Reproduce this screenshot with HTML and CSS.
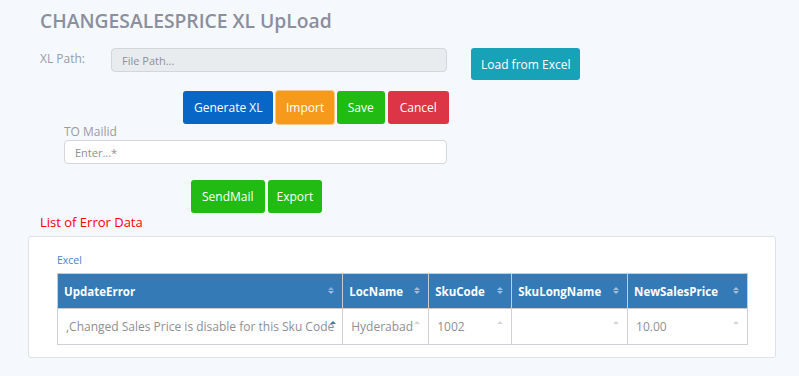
FILE: index.html
```html
<!DOCTYPE html>
<html lang="en">

<head>
    <meta charset="UTF-8">
    <meta name="viewport" content="width=device-width, initial-scale=1.0">
    <title>ChangeSalesPrice XL Upload</title>
    <link rel="stylesheet" href="styles.css">
</head>

<body>
    <div class="page">
        <h1 class="title">CHANGESALESPRICE XL UpLoad</h1>

        <!-- Path row -->
        <div class="path-row">
            <label class="label path-label">XL Path:</label>
            <input class="input input-file" type="text" placeholder="File Path..." disabled>
            <button class="btn btn-info">Load from Excel</button>
        </div>

        <div class="action-row">
            <button class="btn btn-primary">Generate XL</button>
            <button class="btn btn-warning">Import</button>
            <button class="btn btn-success">Save</button>
            <button class="btn btn-danger">Cancel</button>
        </div>

        <!-- Mail -->
        <div class="mail-group">
            <label class="label">TO Mailid</label>
            <input class="input" type="text" placeholder="Enter...*">
        </div>

        <div class="mail-actions">
            <button class="btn btn-success">SendMail</button>
            <button class="btn btn-success btn-export">Export</button>
        </div>

        <h2 class="error-title">List of Error Data</h2>

        <div class="card">
            <a class="excel-link" href="#">Excel</a>
            <table class="grid">
                <thead>
                    <tr>
                        <th class="col-error">UpdateError <span class="sort sort-active"><i class="up"></i><i class="down"></i></span></th>
                        <th class="col-loc">LocName <span class="sort"><i class="up"></i><i class="down"></i></span></th>
                        <th class="col-sku">SkuCode <span class="sort"><i class="up"></i><i class="down"></i></span></th>
                        <th class="col-name">SkuLongName <span class="sort"><i class="up"></i><i class="down"></i></span></th>
                        <th class="col-price">NewSalesPrice <span class="sort"><i class="up"></i><i class="down"></i></span></th>
                    </tr>
                </thead>
                <tbody>
                    <tr>
                        <td>,Changed Sales Price is disable for this Sku Code<span class="cell-sort cell-sort-dark"></span></td>
                        <td>Hyderabad<span class="cell-sort"></span></td>
                        <td>1002<span class="cell-sort"></span></td>
                        <td><span class="cell-sort"></span></td>
                        <td>10.00<span class="cell-sort"></span></td>
                    </tr>
                </tbody>
            </table>
        </div>
    </div>
</body>

</html>
```

FILE: styles.css
```css
/* General Styles */
body {
    margin: 0;
    background: #f5f8fd;
    font-family: 'Open Sans', 'Noto Sans', sans-serif;
    color: #6c757d;
}

.page {
    padding: 0 23px 18px 28px;
}

.title {
    margin: 0;
    padding: 9px 0 0 12px;
    font-size: 19.3px;
    font-weight: 600;
    color: #8b8f9e;
    line-height: 24px;
}

.label {
    font-size: 12px;
    color: #9a9ca3;
}

.input {
    box-sizing: border-box;
    height: 24px;
    border: 1px solid #d3d6da;
    border-radius: 4px;
    padding: 0 10px;
    font-family: inherit;
    font-size: 11px;
    background: #fff;
    color: #6c757d;
}

.input::placeholder {
    color: #8d9096;
}

.input-file {
    width: 336px;
    background: #e9ecef;
}

.path-row {
    display: flex;
    align-items: flex-start;
    margin-top: 15px;
    padding-left: 12px;
}

.path-label {
    width: 71px;
    padding-top: 2px;
}

.path-row .btn {
    margin-left: 24px;
}

.btn {
    border: none;
    border-radius: 3px;
    color: #fff;
    font-family: inherit;
    font-size: 12px;
    font-weight: 500;
    height: 33px;
    padding: 0 11px;
    cursor: pointer;
}

.btn-info {
    background: #17a2b8;
    height: 32px;
    padding: 0 10px;
}

.btn-primary {
    background: #0866c6;
}

.btn-warning {
    background: #f59a1b;
    box-shadow: 0 0 0 1px #f8c98a;
    padding: 0 9.5px;
}

.btn-success {
    background: #21bb13;
}

.btn-danger {
    background: #dc3545;
    padding: 0 12px;
}

.btn-export {
    padding: 0 9px;
}

.action-row {
    display: flex;
    gap: 3px;
    margin-top: 11px;
    padding-left: 155px;
}

.mail-group {
    display: flex;
    flex-direction: column;
    width: 383px;
    margin-top: 0;
    padding-left: 36px;
}

.mail-group .label {
    line-height: 15px;
    margin-bottom: 1px;
}

.mail-actions {
    display: flex;
    gap: 3px;
    margin-top: 16px;
    padding-left: 163px;
}

.error-title {
    margin: 0 0 0 12px;
    font-size: 13px;
    font-weight: 400;
    color: #f00;
    line-height: 18px;
}

.card {
    margin-top: 5px;
    background: #fff;
    border: 1px solid #dfe2e6;
    border-radius: 3px;
    padding: 16px 27px 12px 28px;
}

.excel-link {
    display: block;
    font-size: 10.5px;
    color: #4b7fd0;
    text-decoration: none;
    line-height: 14px;
}

.grid {
    margin-top: 6px;
    border-collapse: collapse;
    width: 691px;
}

.grid th {
    background: #337ab7;
    color: #fff;
    font-size: 11.5px;
    font-weight: 700;
    text-align: left;
    height: 34px;
    padding: 0 6px;
    border: 1px solid #c7ccd2;
    position: relative;
}

.grid td {
    height: 35px;
    padding: 0 6px 0 8px;
    font-size: 12px;
    color: #8d9096;
    border: 1px solid #ced2d6;
    position: relative;
}

.col-error { width: 273px; }
.col-loc { width: 73px; }
.col-sku { width: 70px; }
.col-name { width: 103px; }
.col-price { width: 107px; }

/* sort arrows */
.sort {
    position: absolute;
    right: 8px;
    top: 13px;
    display: flex;
    flex-direction: column;
    gap: 1px;
}

.sort i {
    display: block;
    width: 0;
    height: 0;
    border-left: 3px solid transparent;
    border-right: 3px solid transparent;
}

.sort .up {
    border-bottom: 3px solid #a8bdd3;
}

.sort .down {
    border-top: 3px solid #a8bdd3;
}

.sort-active .up {
    border-bottom-color: #7fb5c9;
}

.cell-sort {
    position: absolute;
    right: 8px;
    top: 12px;
    width: 0;
    height: 0;
    border-left: 3px solid transparent;
    border-right: 3px solid transparent;
    border-bottom: 3px solid #d3d6da;
}

.cell-sort-dark {
    right: 6px;
    border-bottom-color: #2a7f9a;
}
```
